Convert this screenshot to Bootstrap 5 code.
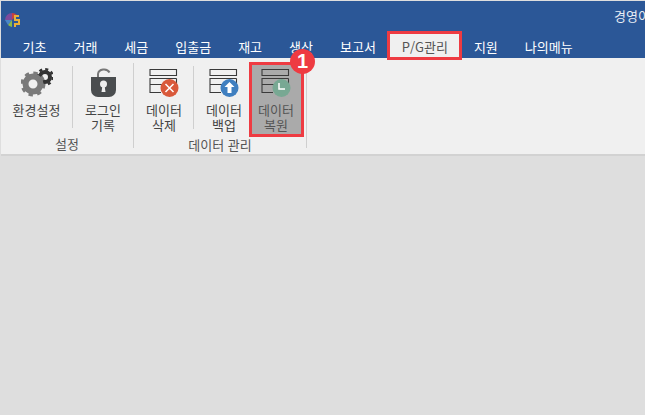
<!DOCTYPE html>
<html lang="ko"><head><meta charset="utf-8">
<link href="https://cdn.jsdelivr.net/npm/bootstrap@5.3.0/dist/css/bootstrap.min.css" rel="stylesheet">
<style>
html,body{margin:0;height:415px;overflow:hidden}
body{background:#dedede;font-family:"Noto Sans CJK KR","Liberation Sans",sans-serif;font-size:13px;color:#444;padding:1px 0 0 1px}
.topbar{height:30px;background:#2b5797;color:#e8edf5;overflow:hidden;white-space:nowrap}
.logo-box{width:613px;padding:8px 0 0 4px;flex:none}
.usertext{line-height:30px}
.tabstrip{height:27px;background:#2b5797;color:#fff;padding-left:8px}
.tabitem{padding:0 13.5px;line-height:31px;height:27px;white-space:nowrap}
.tabitem.picked{background:#f0f0f0;color:#555;position:relative;padding:0;width:71px;text-align:center}
.tabitem.picked::after{content:"";position:absolute;left:-2px;right:-2px;top:0;bottom:-2px;border:3px solid #ee3b42}
.ribbon{height:98px;background:#f0f0f0;border-bottom:2px solid #d2d2d2;padding-top:5px}
.rgroup{height:85px;border-right:1px solid #cfcfcf}
.g133{width:133px}.g173{width:173px}
.ritem{height:73px;padding-top:5px;text-align:center;line-height:15px;flex:none}
.ritem svg{display:block;margin:0 auto 2px}
.rsep{width:1px;background:#cfcfcf;margin:3px 0 8px;flex:none}
.rlabel{height:12px;line-height:16px;text-align:center;color:#555}
.ritem.chosen{background:#aaa;border:3px solid #ee3b42;height:75px;margin-top:-1px;padding:3px 1px 0 0;position:relative;color:#555}
.numbadge{position:absolute;left:38px;top:-16px;width:25px;height:25px;border-radius:50%;background:#ee3b42;color:#fff;font:700 20px/25px "Liberation Sans",sans-serif;text-align:center}
.w71{width:71px}.w60{width:60px}.w59{width:59px;padding-left:1px}.w55{width:55px}.shifted{padding-left:5px}
</style></head><body>
<div class="topbar d-flex">
<div class="logo-box"><svg width="16" height="16" viewBox="0 0 16 16"><path d="M7 8V1a7 7 0 0 1 5 2z" fill="#c8423e"/><path d="M7 8V1a7 7 0 0 0-7 7z" fill="#7d4a9c"/><path d="M0 8h7l-4 5z" fill="#4a86c8"/><path d="M7 8v7a7 7 0 0 1-4-2z" fill="#8dbb4a"/><path d="M14 4H10V8H14V12H10V15" fill="none" stroke="#e8b13a" stroke-width="2"/></svg></div>
<div class="usertext">경영이사님</div>
</div>
<div class="tabstrip d-flex">
<div class="tabitem">기초</div><div class="tabitem">거래</div><div class="tabitem">세금</div><div class="tabitem">입출금</div><div class="tabitem">재고</div><div class="tabitem">생산</div><div class="tabitem">보고서</div><div class="tabitem picked">P/G관리</div><div class="tabitem">지원</div><div class="tabitem">나의메뉴</div>
</div>
<div class="ribbon d-flex">
<div class="rgroup g133">
<div class="d-flex">
<div class="ritem w71"><svg width="32" height="32" viewBox="0 0 32 32"><circle cx="24" cy="9" r="5" fill="none" stroke="#333" stroke-width="4"/><circle cx="24" cy="9" r="7.800" fill="none" stroke="#333" stroke-width="2.400" stroke-dasharray="3.060 3.060"/><circle cx="12" cy="16" r="7.500" fill="none" stroke="#7a7a7a" stroke-width="6"/><circle cx="12" cy="16" r="11" fill="none" stroke="#7a7a7a" stroke-width="3" stroke-dasharray="4.320 4.320"/></svg>환경설정</div>
<div class="rsep"></div>
<div class="ritem w60"><svg width="32" height="32" viewBox="0 0 32 32"><path d="M11 9V6a6 5 0 0 1 11.500-1.500" fill="none" stroke="#777" stroke-width="2"/><path d="M4 9h25v13a7 7 0 0 1-7 7H11a7 7 0 0 1-7-7z" fill="#4a4d4f"/><circle cx="16.500" cy="16" r="3.500" fill="#eee"/><path d="M15.500 17h2l1 7h-4z" fill="#eee"/></svg>로그인<br>기록</div>
</div>
<div class="rlabel">설정</div>
</div>
<div class="rgroup g173">
<div class="d-flex">
<div class="ritem w59"><svg width="32" height="32" viewBox="0 0 32 32"><use href="#dbs"/><circle cx="21.500" cy="20" r="9" fill="#d9593b"/><path d="M17.500 16l8 8m0-8l-8 8" stroke="#fff" stroke-width="1.500"/></svg>데이터<br>삭제</div>
<div class="rsep"></div>
<div class="ritem w55 shifted"><svg width="32" height="32" viewBox="0 0 32 32"><use href="#dbs"/><circle cx="21.500" cy="20" r="9" fill="#3f7fc0"/><path d="M21.500 14l5 5h-3v6h-4v-6h-3z" fill="#fff"/></svg>데이터<br>백업</div>
<div class="ritem chosen w55"><span class="numbadge">1</span><svg width="32" height="32" viewBox="0 0 32 32"><use href="#dbs"/><circle cx="21.500" cy="20" r="9" fill="#78a893"/><path d="M19 15v6h6" fill="none" stroke="#fff" stroke-width="1.500"/></svg>데이터<br>복원</div>
</div>
<div class="rlabel">데이터 관리</div>
</div>
</div>
<svg width="0" height="0" class="d-block"><defs><g id="dbs" fill="none" stroke="#3a3a3a" stroke-width="1.100"><path d="M2 1.500h26.500v6H2zM28.500 10.500H2v6h26.500v-6M13 16.500M2 16.500v8h11"/></g></defs></svg>
</body></html>
